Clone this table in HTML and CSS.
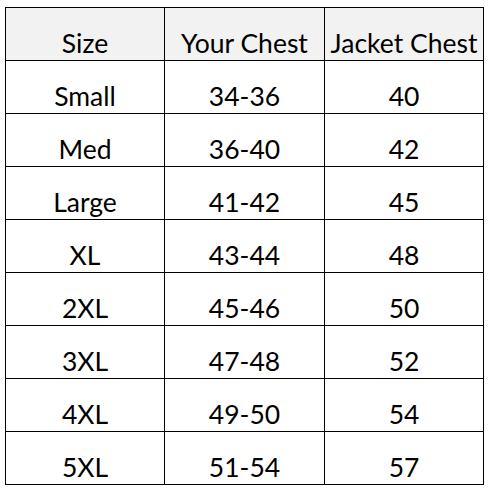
FILE: index.html
```html
<!DOCTYPE html>
<html>
<head>
<meta charset="utf-8">
<link rel="stylesheet" href="styles.css">
</head>
<body>
<table class="sizes">
  <colgroup><col class="c1"><col class="c2"><col class="c3"></colgroup>
  <thead>
    <tr><th>Size</th><th>Your Chest</th><th>Jacket Chest</th></tr>
  </thead>
  <tbody>
    <tr><td>Small</td><td>34-36</td><td>40</td></tr>
    <tr><td>Med</td><td>36-40</td><td>42</td></tr>
    <tr><td>Large</td><td>41-42</td><td>45</td></tr>
    <tr><td>XL</td><td>43-44</td><td>48</td></tr>
    <tr><td>2XL</td><td>45-46</td><td>50</td></tr>
    <tr><td>3XL</td><td>47-48</td><td>52</td></tr>
    <tr><td>4XL</td><td>49-50</td><td>54</td></tr>
    <tr><td>5XL</td><td>51-54</td><td>57</td></tr>
  </tbody>
</table>
</body>
</html>
```
FILE: styles.css
```css
html, body {
  margin: 0;
  padding: 0;
  background: #ffffff;
}
body {
  padding: 7px 0 0 5px;
}
.sizes {
  border-collapse: collapse;
  table-layout: fixed;
  width: 478px;
  font-family: Lato, "Open Sans", sans-serif;
  font-size: 26.5px;
  color: #000;
}
.c1 { width: 159px; }
.c2 { width: 160px; }
.c3 { width: 159px; }
.sizes th, .sizes td {
  border: 1.5px solid #000;
  height: 53px;
  padding: 0 0 3px 0;
  box-sizing: border-box;
  text-align: center;
  vertical-align: bottom;
  font-weight: normal;
  line-height: 28px;
}
.sizes th {
  background: #f2f2f2;
}
```
